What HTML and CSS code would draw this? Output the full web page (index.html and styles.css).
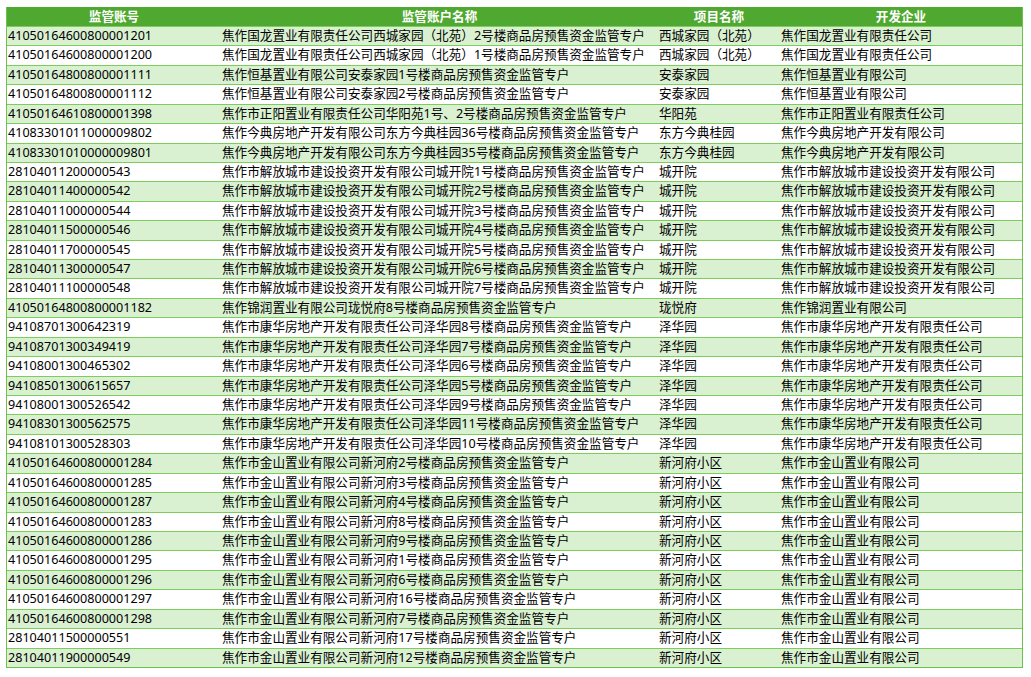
FILE: index.html
```html
<!DOCTYPE html>
<html lang="zh-CN">
<head>
<meta charset="utf-8">
<title>监管账户</title>
<link rel="stylesheet" href="styles.css">
</head>
<body>
<table class="grid">
<colgroup><col class="c1"><col class="c2"><col class="c3"><col class="c4"></colgroup>
<thead>
<tr><th>监管账号</th><th>监管账户名称</th><th>项目名称</th><th>开发企业</th></tr>
</thead>
<tbody>
<tr><td>41050164600800001201</td><td>焦作国龙置业有限责任公司西城家园（北苑）2号楼商品房预售资金监管专户</td><td>西城家园（北苑）</td><td>焦作国龙置业有限责任公司</td></tr>
<tr><td>41050164600800001200</td><td>焦作国龙置业有限责任公司西城家园（北苑）1号楼商品房预售资金监管专户</td><td>西城家园（北苑）</td><td>焦作国龙置业有限责任公司</td></tr>
<tr><td>41050164800800001111</td><td>焦作恒基置业有限公司安泰家园1号楼商品房预售资金监管专户</td><td>安泰家园</td><td>焦作恒基置业有限公司</td></tr>
<tr><td>41050164800800001112</td><td>焦作恒基置业有限公司安泰家园2号楼商品房预售资金监管专户</td><td>安泰家园</td><td>焦作恒基置业有限公司</td></tr>
<tr><td>41050164610800001398</td><td>焦作市正阳置业有限责任公司华阳苑1号、2号楼商品房预售资金监管专户</td><td>华阳苑</td><td>焦作市正阳置业有限责任公司</td></tr>
<tr><td>41083301011000009802</td><td>焦作今典房地产开发有限公司东方今典桂园36号楼商品房预售资金监管专户</td><td>东方今典桂园</td><td>焦作今典房地产开发有限公司</td></tr>
<tr><td>41083301010000009801</td><td>焦作今典房地产开发有限公司东方今典桂园35号楼商品房预售资金监管专户</td><td>东方今典桂园</td><td>焦作今典房地产开发有限公司</td></tr>
<tr><td>28104011200000543</td><td>焦作市解放城市建设投资开发有限公司城开院1号楼商品房预售资金监管专户</td><td>城开院</td><td>焦作市解放城市建设投资开发有限公司</td></tr>
<tr><td>28104011400000542</td><td>焦作市解放城市建设投资开发有限公司城开院2号楼商品房预售资金监管专户</td><td>城开院</td><td>焦作市解放城市建设投资开发有限公司</td></tr>
<tr><td>28104011000000544</td><td>焦作市解放城市建设投资开发有限公司城开院3号楼商品房预售资金监管专户</td><td>城开院</td><td>焦作市解放城市建设投资开发有限公司</td></tr>
<tr><td>28104011500000546</td><td>焦作市解放城市建设投资开发有限公司城开院4号楼商品房预售资金监管专户</td><td>城开院</td><td>焦作市解放城市建设投资开发有限公司</td></tr>
<tr><td>28104011700000545</td><td>焦作市解放城市建设投资开发有限公司城开院5号楼商品房预售资金监管专户</td><td>城开院</td><td>焦作市解放城市建设投资开发有限公司</td></tr>
<tr><td>28104011300000547</td><td>焦作市解放城市建设投资开发有限公司城开院6号楼商品房预售资金监管专户</td><td>城开院</td><td>焦作市解放城市建设投资开发有限公司</td></tr>
<tr><td>28104011100000548</td><td>焦作市解放城市建设投资开发有限公司城开院7号楼商品房预售资金监管专户</td><td>城开院</td><td>焦作市解放城市建设投资开发有限公司</td></tr>
<tr><td>41050164800800001182</td><td>焦作锦润置业有限公司珑悦府8号楼商品房预售资金监管专户</td><td>珑悦府</td><td>焦作锦润置业有限公司</td></tr>
<tr><td>94108701300642319</td><td>焦作市康华房地产开发有限责任公司泽华园8号楼商品房预售资金监管专户</td><td>泽华园</td><td>焦作市康华房地产开发有限责任公司</td></tr>
<tr><td>94108701300349419</td><td>焦作市康华房地产开发有限责任公司泽华园7号楼商品房预售资金监管专户</td><td>泽华园</td><td>焦作市康华房地产开发有限责任公司</td></tr>
<tr><td>94108001300465302</td><td>焦作市康华房地产开发有限责任公司泽华园6号楼商品房预售资金监管专户</td><td>泽华园</td><td>焦作市康华房地产开发有限责任公司</td></tr>
<tr><td>94108501300615657</td><td>焦作市康华房地产开发有限责任公司泽华园5号楼商品房预售资金监管专户</td><td>泽华园</td><td>焦作市康华房地产开发有限责任公司</td></tr>
<tr><td>94108001300526542</td><td>焦作市康华房地产开发有限责任公司泽华园9号楼商品房预售资金监管专户</td><td>泽华园</td><td>焦作市康华房地产开发有限责任公司</td></tr>
<tr><td>94108301300562575</td><td>焦作市康华房地产开发有限责任公司泽华园11号楼商品房预售资金监管专户</td><td>泽华园</td><td>焦作市康华房地产开发有限责任公司</td></tr>
<tr><td>94108101300528303</td><td>焦作市康华房地产开发有限责任公司泽华园10号楼商品房预售资金监管专户</td><td>泽华园</td><td>焦作市康华房地产开发有限责任公司</td></tr>
<tr><td>41050164600800001284</td><td>焦作市金山置业有限公司新河府2号楼商品房预售资金监管专户</td><td>新河府小区</td><td>焦作市金山置业有限公司</td></tr>
<tr><td>41050164600800001285</td><td>焦作市金山置业有限公司新河府3号楼商品房预售资金监管专户</td><td>新河府小区</td><td>焦作市金山置业有限公司</td></tr>
<tr><td>41050164600800001287</td><td>焦作市金山置业有限公司新河府4号楼商品房预售资金监管专户</td><td>新河府小区</td><td>焦作市金山置业有限公司</td></tr>
<tr><td>41050164600800001283</td><td>焦作市金山置业有限公司新河府8号楼商品房预售资金监管专户</td><td>新河府小区</td><td>焦作市金山置业有限公司</td></tr>
<tr><td>41050164600800001286</td><td>焦作市金山置业有限公司新河府9号楼商品房预售资金监管专户</td><td>新河府小区</td><td>焦作市金山置业有限公司</td></tr>
<tr><td>41050164600800001295</td><td>焦作市金山置业有限公司新河府1号楼商品房预售资金监管专户</td><td>新河府小区</td><td>焦作市金山置业有限公司</td></tr>
<tr><td>41050164600800001296</td><td>焦作市金山置业有限公司新河府6号楼商品房预售资金监管专户</td><td>新河府小区</td><td>焦作市金山置业有限公司</td></tr>
<tr><td>41050164600800001297</td><td>焦作市金山置业有限公司新河府16号楼商品房预售资金监管专户</td><td>新河府小区</td><td>焦作市金山置业有限公司</td></tr>
<tr><td>41050164600800001298</td><td>焦作市金山置业有限公司新河府7号楼商品房预售资金监管专户</td><td>新河府小区</td><td>焦作市金山置业有限公司</td></tr>
<tr><td>28104011500000551</td><td>焦作市金山置业有限公司新河府17号楼商品房预售资金监管专户</td><td>新河府小区</td><td>焦作市金山置业有限公司</td></tr>
<tr><td>28104011900000549</td><td>焦作市金山置业有限公司新河府12号楼商品房预售资金监管专户</td><td>新河府小区</td><td>焦作市金山置业有限公司</td></tr>
</tbody>
</table>
</body>
</html>
```

FILE: styles.css
```css
html, body {
  margin: 0;
  padding: 0;
  background: #ffffff;
}

.grid {
  margin: 7px 0 0 6px;
  width: 1017px;
  table-layout: fixed;
  border-collapse: separate;
  border-spacing: 0;
  border-left: 1px solid #6cc24a;
  border-right: 1px solid #6cc24a;
  border-bottom: 1px solid #6cc24a;
  font-family: "Noto Sans", "Noto Sans CJK SC", sans-serif;
  font-size: 12.6px;
  color: #000000;
}

.c1 { width: 214px; }
.c2 { width: 437px; }
.c3 { width: 122px; }
.c4 { width: 242px; }

.grid th {
  background: #4fa82f;
  color: #ffffff;
  font-weight: bold;
  text-align: center;
  height: 19px;
  line-height: 19px;
  padding: 0;
  white-space: nowrap;
}

.grid td {
  border-top: 1px solid #7ccd5c;
  line-height: 18.42px;
  padding: 0 0 0 1px;
  white-space: nowrap;
  overflow: hidden;
}

.grid tbody tr:nth-child(odd) td {
  background: #d9f1d0;
}

.grid tbody tr:nth-child(even) td {
  background: #ffffff;
}
```
